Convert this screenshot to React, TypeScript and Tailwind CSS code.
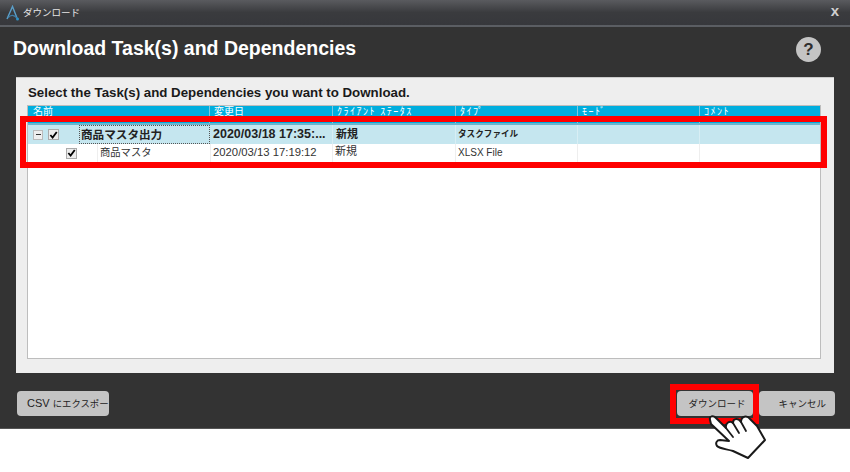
import React from "react";

const jp = "font-['Liberation_Sans','Noto_Sans_CJK_JP',sans-serif]";

function Check({ className = "" }: { className?: string }) {
  return (
    <span className={`flex h-[11px] w-[11px] items-center justify-center border border-[#aaa] bg-[#ececec] ${className}`}>
      <svg viewBox="0 0 10 10" className="h-[10px] w-[10px]">
        <path d="M1.5 5 L4 7.8 L8.6 1.6" fill="none" stroke="#000" strokeWidth="2" />
      </svg>
    </span>
  );
}

function Hand() {
  return (
    <svg viewBox="705 410 65 52" className="absolute left-[705px] top-[410px] h-[52px] w-[65px]">
      <path
        d="M710 420 C709 416 713 415 716 418 L726 428 C725 423 730 420 733 423 C733 418 738 418 741 422 C741 416 747 415 750 419 L757 426 L765 440 L748 458 L733 451 C727 449 720 449 717 446 C715 443 717 440 720 440 L729 441 L711 424 Z"
        fill="#fff"
        stroke="#1a1a1a"
        strokeWidth="2"
        strokeLinejoin="round"
      />
      <path d="M726 428 L733 437 M733 423 L739 433 M741 422 L746 431" fill="none" stroke="#1a1a1a" strokeWidth="1.8" strokeLinecap="round" />
    </svg>
  );
}

const cols = ["w-[181px]", "w-[123px]", "w-[123px]", "w-[122px]", "w-[122px]", "flex-1"];
const headers = [
  { label: "名前", cls: "" },
  { label: "変更日", cls: "" },
  { label: "ｸﾗｲｱﾝﾄ ｽﾃｰﾀｽ", cls: "tracking-[1.5px]" },
  { label: "ﾀｲﾌﾟ", cls: "tracking-[1.5px]" },
  { label: "ﾓｰﾄﾞ", cls: "tracking-[1.5px]" },
  { label: "ｺﾒﾝﾄ", cls: "tracking-[1.5px]" },
];

export default function App() {
  return (
    <div className={`relative h-[472px] w-[850px] overflow-hidden bg-white ${jp}`}>
      <div className="flex h-[429px] w-[850px] flex-col border-b border-[#555] bg-[#333333]">
        <div className="flex h-[27px] items-center border-b-2 border-[#5b5e63] bg-gradient-to-b from-[#5a5b5f] via-[#3a3b3e] to-[#37383c] pl-[6px] pr-[11px]">
          <svg viewBox="0 0 14 16" className="h-[16px] w-[14px]">
            <path d="M1 14 L6.5 1.5 L11 13" fill="none" stroke="#5b9fc9" strokeWidth="1.4" />
            <path d="M2 13 C5 9 8 10 11 13" fill="none" stroke="#3f7ea8" strokeWidth="1.2" />
            <circle cx="11.5" cy="14" r="1.5" fill="#2f93c7" />
          </svg>
          <span className="ml-[3px] text-[9.5px] leading-none text-[#e6e6e6]">ダウンロード</span>
          <span className="mb-[4px] ml-auto text-[15px] font-bold leading-none text-[#d0d0d0]">x</span>
        </div>
        <div className="flex flex-1 flex-col px-[16px]">
          <div className="flex h-[50px] items-center justify-between pb-[6px] pr-[13px]">
            <h1 className="-ml-[3px] text-[19.5px] font-bold leading-none text-white">
              Download Task(s) and Dependencies
            </h1>
            <span className="flex h-[25px] w-[25px] items-center justify-center rounded-full bg-[#c4c4c4] text-[17px] font-bold leading-none text-[#2e2e2e]">
              ?
            </span>
          </div>
          <div className="flex h-[296px] w-[818px] flex-col border-t border-[#ccc] bg-[#eeeeee] px-[11px]">
            <p className="flex h-[27px] items-center pl-px pt-[3px] text-[13.3px] font-bold leading-none text-[#1a1a1a]">
              Select the Task(s) and Dependencies you want to Download.
            </p>
            <div className="flex h-[254px] w-[794px] flex-col border border-[#bdbdbd] bg-white">
              <div className="flex h-[19px] border-b-2 border-[#6bb6cf] bg-[#00aede] pl-[1px]">
                {headers.map((h, i) => (
                  <div key={h.label} className={`${cols[i]} ${h.cls} overflow-hidden border-r border-[#7cc9e2] pl-[4px] text-[10px] leading-[12px] text-white last:border-r-0`}>
                    {h.label}
                  </div>
                ))}
              </div>
              <div className="flex h-[19px] bg-[#c5e6ef] pl-[1px] text-[#222]">
                <div className={`${cols[0]} flex items-center`}>
                  <span className="ml-[4px] flex h-[10px] w-[10px] items-center justify-center border border-[#bbb] bg-[#eee]">
                    <span className="h-px w-[5px] bg-[#333]" />
                  </span>
                  <Check className="ml-[5px]" />
                  <span className="ml-[20px] flex h-full flex-1 items-center border border-dotted border-[#555] pl-[1px] text-[11.6px] font-bold leading-none">
                    商品マスタ出力
                  </span>
                </div>
                <div className={`${cols[1]} flex items-center border-r border-[#d8eef4] pl-[3px] text-[12.5px] font-bold leading-none`}>
                  2020/03/18 17:35:...
                </div>
                <div className={`${cols[2]} flex items-center border-r border-[#d8eef4] pl-[3px] text-[11px] font-bold leading-none`}>新規</div>
                <div className={`${cols[3]} flex items-center border-r border-[#d8eef4] pl-[2px] text-[8.6px] font-bold leading-none`}>タスクファイル</div>
                <div className={`${cols[4]} border-r border-[#d8eef4]`} />
                <div className="flex-1" />
              </div>
              <div className="flex h-[19px] border-b border-[#eee] pl-[1px] text-[#333]">
                <div className={`${cols[0]} flex items-center`}>
                  <Check className="ml-[37px]" />
                  <span className="ml-[20px] flex h-full flex-1 items-center border-l border-[#eee] pl-[2px] text-[10.3px] leading-none">
                    商品マスタ
                  </span>
                </div>
                <div className={`${cols[1]} flex items-center border-x border-[#eee] pl-[2px] text-[11.3px] leading-none`}>2020/03/13 17:19:12</div>
                <div className={`${cols[2]} flex items-center border-r border-[#eee] pb-[3px] pl-[2px] text-[11px] leading-none`}>新規</div>
                <div className={`${cols[3]} flex items-center border-r border-[#eee] pl-[2px] text-[10px] leading-none`}>XLSX File</div>
                <div className={`${cols[4]} border-r border-[#eee]`} />
                <div className="flex-1" />
              </div>
            </div>
          </div>
          <div className="flex flex-1 items-center justify-between pl-px pt-[6px]">
            <div className="flex h-[25px] w-[92px] items-center justify-start overflow-hidden whitespace-nowrap rounded-[4px] bg-[#c4c4c4] pl-[10px] text-[11px] leading-none text-[#222]">
              CSV
              <span className="ml-[3px] text-[9.4px]">にエクスポー</span>
            </div>
            <div className="-mr-px flex gap-[6px]">
              <div className="flex h-[25px] w-[76px] items-center justify-center rounded-[4px] bg-[#c4c4c4] pl-[4px] text-[9.5px] leading-none text-[#222]">ダウンロード</div>
              <div className="flex h-[25px] w-[76px] items-center justify-end rounded-[4px] bg-[#c4c4c4] pr-[9px] text-[9.5px] leading-none text-[#222]">キャンセル</div>
            </div>
          </div>
        </div>
      </div>
      <div className="absolute left-[20px] top-[116px] h-[52px] w-[807px] border-[6px] border-[#ff0000]" />
      <div className="absolute left-[670px] top-[384px] h-[40px] w-[89px] border-[6px] border-[#ff0000]" />
      <Hand />
    </div>
  );
}
